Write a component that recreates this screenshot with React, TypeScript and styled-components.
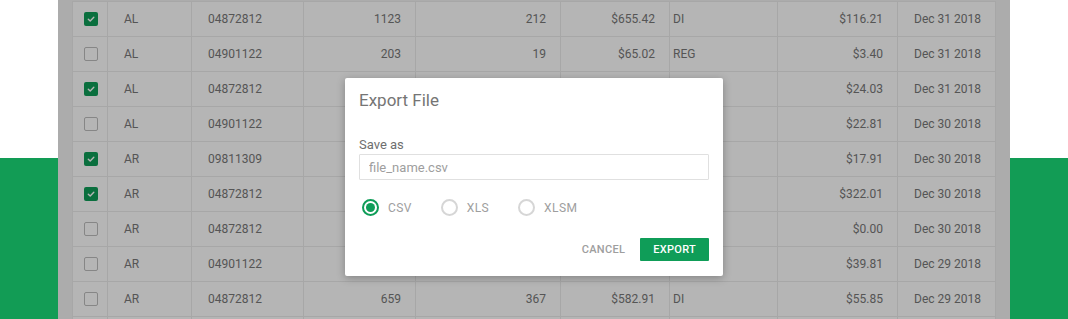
import React from "react";
import styled, { createGlobalStyle } from "styled-components";

const GREEN = "#0f9d58";

const GlobalStyle = createGlobalStyle`
  html, body {
    margin: 0;
    padding: 0;
    height: 319px;
    overflow: hidden;
  }
  body {
    background: linear-gradient(to bottom, #ffffff 0 158px, #129c55 158px);
    font-family: Roboto, "Liberation Sans", Arial, sans-serif;
  }
`;

type TRow = {
  checked: boolean;
  state: string;
  code: string;
  qty: string;
  units: string;
  amount: string;
  kind: string;
  fee: string;
  date: string;
};

const rows: TRow[] = [
  { checked: true, state: "AL", code: "04872812", qty: "1123", units: "212", amount: "$655.42", kind: "DI", fee: "$116.21", date: "Dec 31 2018" },
  { checked: false, state: "AL", code: "04901122", qty: "203", units: "19", amount: "$65.02", kind: "REG", fee: "$3.40", date: "Dec 31 2018" },
  { checked: true, state: "AL", code: "04872812", qty: "412", units: "88", amount: "$132.10", kind: "DI", fee: "$24.03", date: "Dec 31 2018" },
  { checked: false, state: "AL", code: "04901122", qty: "310", units: "52", amount: "$101.44", kind: "REG", fee: "$22.81", date: "Dec 30 2018" },
  { checked: true, state: "AR", code: "09811309", qty: "96", units: "41", amount: "$88.50", kind: "DI", fee: "$17.91", date: "Dec 30 2018" },
  { checked: true, state: "AR", code: "04872812", qty: "1540", units: "604", amount: "$1,402.77", kind: "DI", fee: "$322.01", date: "Dec 30 2018" },
  { checked: false, state: "AR", code: "04872812", qty: "0", units: "0", amount: "$0.00", kind: "REG", fee: "$0.00", date: "Dec 30 2018" },
  { checked: false, state: "AR", code: "04901122", qty: "288", units: "73", amount: "$176.30", kind: "REG", fee: "$39.81", date: "Dec 29 2018" },
  { checked: false, state: "AR", code: "04872812", qty: "659", units: "367", amount: "$582.91", kind: "DI", fee: "$55.85", date: "Dec 29 2018" },
];

const Page = styled.div`
  padding: 0 58px;
`;

const Card = styled.div`
  position: relative;
  background: #f2f2f2;
  padding: 1px 14px 0;
`;

const Grid = styled.div`
  border-left: 1px solid #ececec;
  border-top: 1px solid #ececec;
  background: #ffffff;
`;

const Row = styled.div`
  display: grid;
  grid-template-columns: 35px 84px 112px 112px 145px 109px 108px 120px 98px;
  height: 35px;
`;

const Cell = styled.div<{ $align?: "left" | "right" | "center"; $pad?: number }>`
  box-sizing: border-box;
  display: flex;
  align-items: center;
  justify-content: ${(p) =>
    p.$align === "right" ? "flex-end" : p.$align === "center" ? "center" : "flex-start"};
  padding: 0 ${(p) => (p.$align === "right" ? 14 : 0)}px 0
    ${(p) => (p.$align === "left" ? p.$pad ?? 16 : 0)}px;
  border-right: 1px solid #ececec;
  border-bottom: 1px solid #ececec;
  font-size: 12px;
  color: #787878;
  white-space: nowrap;
`;

const Box = styled.span<{ $on: boolean }>`
  box-sizing: border-box;
  width: 14px;
  height: 14px;
  border-radius: 2px;
  display: flex;
  align-items: center;
  justify-content: center;
  background: ${(p) => (p.$on ? GREEN : "#ffffff")};
  border: ${(p) => (p.$on ? "none" : "1.5px solid #bdbdbd")};
  margin-left: 1px;
`;

const Overlay = styled.div`
  position: absolute;
  inset: 0;
  background: rgba(0, 0, 0, 0.29);
  display: flex;
  justify-content: center;
  align-items: flex-start;
  padding-top: 78px;
`;

const Dialog = styled.div`
  width: 378px;
  box-sizing: border-box;
  background: #ffffff;
  border-radius: 2px;
  box-shadow: 0 2px 8px rgba(0, 0, 0, 0.28);
  padding: 12px 14px 15px;
  display: flex;
  flex-direction: column;
`;

const Title = styled.h2`
  margin: 0;
  font-size: 17px;
  line-height: 20px;
  font-weight: 400;
  color: #757575;
`;

const Label = styled.label`
  margin-top: 27px;
  font-size: 13px;
  line-height: 16px;
  color: #6e6e6e;
`;

const Input = styled.input`
  margin-top: 1px;
  box-sizing: border-box;
  width: 350px;
  height: 26px;
  border: 1px solid #e0e0e0;
  border-radius: 1px;
  padding: 0 9px;
  font-family: inherit;
  font-size: 13px;
  color: #616161;
  outline: none;
  &::placeholder {
    color: #9e9e9e;
  }
`;

const Options = styled.div`
  display: flex;
  align-items: center;
  gap: 29px;
  margin-top: 19px;
  padding-left: 3px;
`;

const Option = styled.span`
  display: flex;
  align-items: center;
  gap: 9px;
  font-size: 12px;
  letter-spacing: 0.4px;
  color: #9e9e9e;
`;

const Radio = styled.span<{ $on: boolean }>`
  box-sizing: border-box;
  width: 17px;
  height: 17px;
  border-radius: 50%;
  border: 2px solid ${(p) => (p.$on ? GREEN : "#d6d6d6")};
  display: flex;
  align-items: center;
  justify-content: center;
  &::after {
    content: "";
    width: 9px;
    height: 9px;
    border-radius: 50%;
    background: ${(p) => (p.$on ? GREEN : "transparent")};
  }
`;

const Actions = styled.div`
  display: flex;
  justify-content: flex-end;
  align-items: center;
  gap: 15px;
  margin-top: 22px;
`;

const Button = styled.button<{ $primary?: boolean }>`
  height: 23px;
  padding: 0 ${(p) => (p.$primary ? 13 : 0)}px;
  border: none;
  border-radius: 1px;
  background: ${(p) => (p.$primary ? GREEN : "transparent")};
  color: ${(p) => (p.$primary ? "#ffffff" : "#9e9e9e")};
  font-family: inherit;
  font-size: 11px;
  font-weight: 500;
  letter-spacing: 0.3px;
  cursor: pointer;
`;

const Check = () => (
  <svg width="10" height="10" viewBox="0 0 10 10">
    <path d="M2.3 5.2 L4.2 7 L7.8 3.3" fill="none" stroke="#ffffff" strokeWidth="1.4" strokeLinecap="round" strokeLinejoin="round" />
  </svg>
);

const EmptyRow = () => (
  <Row>
    {Array.from({ length: 9 }).map((_, i) => (
      <Cell key={i} />
    ))}
  </Row>
);

export default function App() {
  return (
    <>
      <GlobalStyle />
      <Page>
        <Card>
          <Grid>
            {rows.map((r, i) => (
              <Row key={i}>
                <Cell $align="center">
                  <Box $on={r.checked}>{r.checked && <Check />}</Box>
                </Cell>
                <Cell $align="left">{r.state}</Cell>
                <Cell $align="left">{r.code}</Cell>
                <Cell $align="right">{r.qty}</Cell>
                <Cell $align="right">{r.units}</Cell>
                <Cell $align="right">{r.amount}</Cell>
                <Cell $align="left" $pad={3}>{r.kind}</Cell>
                <Cell $align="right">{r.fee}</Cell>
                <Cell $align="right">{r.date}</Cell>
              </Row>
            ))}
            <EmptyRow />
          </Grid>
          <Overlay>
            <Dialog>
              <Title>Export File</Title>
              <Label htmlFor="save-as">Save as</Label>
              <Input id="save-as" placeholder="file_name.csv" />
              <Options>
                <Option>
                  <Radio $on />
                  CSV
                </Option>
                <Option>
                  <Radio $on={false} />
                  XLS
                </Option>
                <Option>
                  <Radio $on={false} />
                  XLSM
                </Option>
              </Options>
              <Actions>
                <Button>CANCEL</Button>
                <Button $primary>EXPORT</Button>
              </Actions>
            </Dialog>
          </Overlay>
        </Card>
      </Page>
    </>
  );
}
